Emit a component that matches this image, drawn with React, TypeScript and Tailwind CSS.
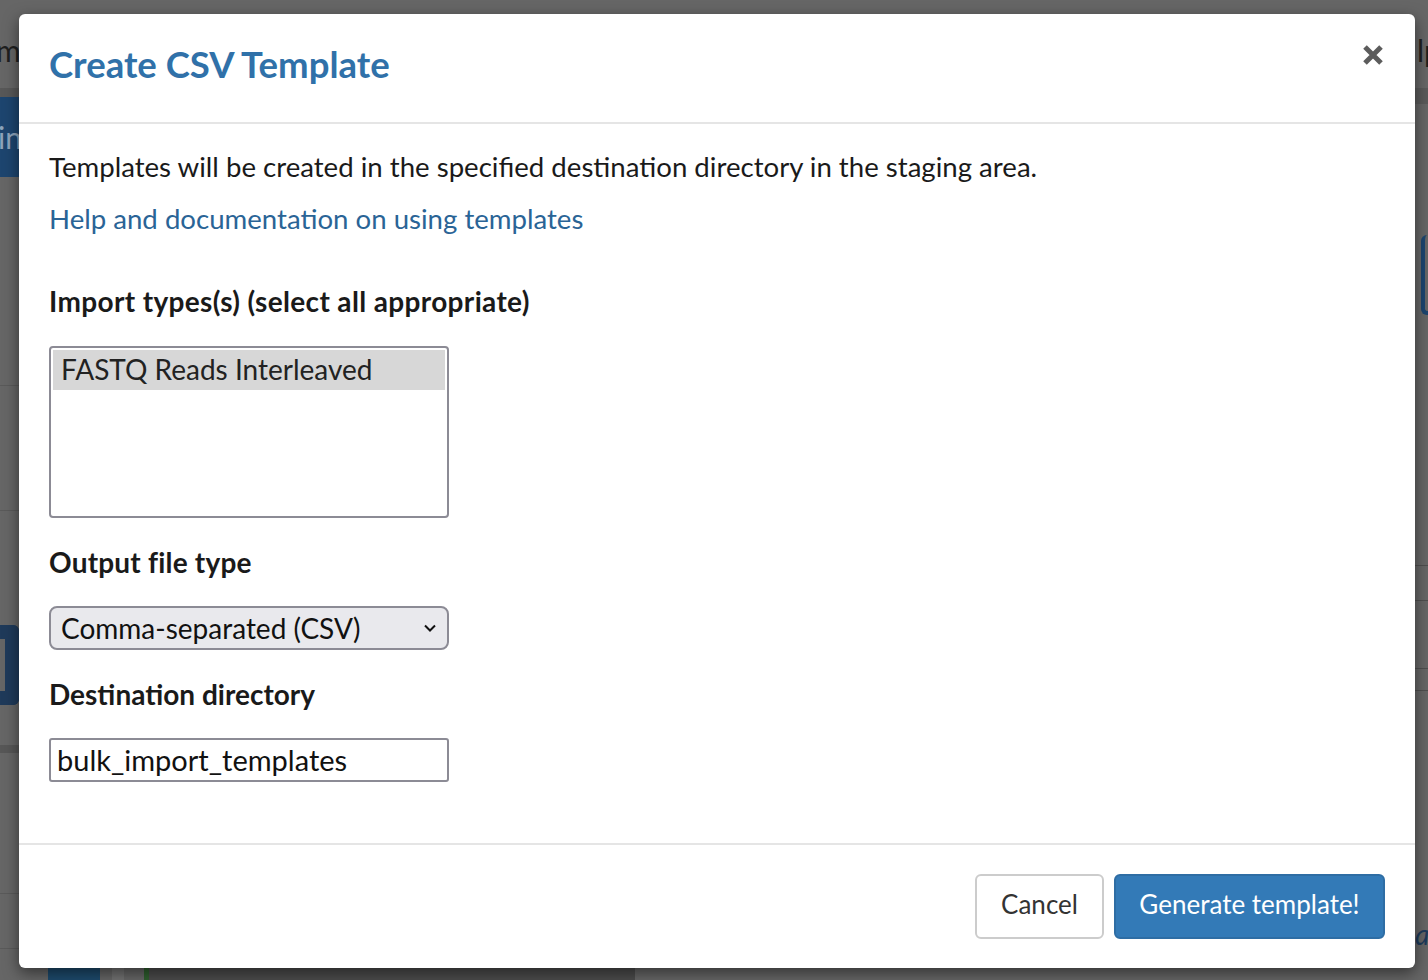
import React from 'react'

const font = { fontFamily: 'Lato, "Noto Sans", sans-serif' }

function BackgroundPage() {
  return (
    <div className="flex h-[980px] w-[1428px] bg-[#666666]">
      {/* left sliver of the page behind */}
      <div className="flex w-[19px] flex-col overflow-hidden">
        <div className="h-[30px]" />
        <div className="h-[58px] whitespace-nowrap text-[30px] leading-[40px] text-[#1f1f1f] -ml-[4px]">m</div>
        <div className="h-[9px] bg-[#585858]" />
        <div className="flex h-[80px] items-center whitespace-nowrap bg-[#1d456f] text-[30px] text-[#8ea4bb] -ml-[2px]">in</div>
        <div className="h-[208px]" />
        <div className="h-px bg-[#5a5a5a]" />
        <div className="h-[124px]" />
        <div className="h-px bg-[#5a5a5a]" />
        <div className="h-[114px]" />
        <div className="flex h-[80px] items-center">
          <div className="h-[80px] w-[19px] border-[14px] border-[#1f3a5a] border-l-0 rounded-r-[6px]" />
        </div>
        <div className="h-[40px]" />
        <div className="h-[8px] bg-[#575757]" />
        <div className="h-[140px]" />
        <div className="h-px bg-[#5a5a5a]" />
        <div className="h-[54px]" />
        <div className="h-px bg-[#5a5a5a]" />
      </div>

      <div className="flex flex-1 flex-col">
        <div className="h-[968px]" />
        <div className="flex h-[12px]">
          <div className="w-[29px]" />
          <div className="w-[52px] bg-[#1d4a6c]" />
          <div className="w-[12px]" />
          <div className="w-[12px] bg-[#727272]" />
          <div className="w-[20px]" />
          <div className="w-[5px] bg-[#2f5f2f]" />
          <div className="w-[486px] bg-[#4c4c4c]" />
        </div>
      </div>

      {/* right sliver */}
      <div className="flex w-[13px] flex-col overflow-hidden">
        <div className="h-[30px]" />
        <div className="h-[58px] whitespace-nowrap text-[30px] leading-[40px] text-[#1f1f1f] ml-[2px]">lp</div>
        <div className="h-[16px] bg-[#5a5a5a]" />
        <div className="h-[131px]" />
        <div className="ml-[6px] h-[80px] rounded-l-[6px] border-l-[4px] border-b-[4px] border-[#1d456f]" />
        <div className="h-[250px]" />
        <div className="h-px bg-[#4f4f4f]" />
        <div className="h-[34px]" />
        <div className="h-px bg-[#4f4f4f]" />
        <div className="h-[67px]" />
        <div className="h-px bg-[#4f4f4f]" />
        <div className="h-[21px]" />
        <div className="h-px bg-[#4f4f4f]" />
        <div className="h-[228px]" />
        <div className="text-[28px] italic leading-[30px] text-[#1d3a5a]">a</div>
      </div>
    </div>
  )
}

function CloseIcon() {
  return (
    <svg width="22" height="22" viewBox="0 0 22 22">
      <path d="M3 3 L19 19 M19 3 L3 19" stroke="#5c5c5c" strokeWidth="5" strokeLinecap="butt" />
    </svg>
  )
}

export default function App() {
  return (
    <div className="relative h-[980px] w-[1428px] overflow-hidden" style={font}>
      <BackgroundPage />

      <div className="absolute left-[19px] top-[14px] flex h-[954px] w-[1396px] flex-col rounded-[6px] bg-white shadow-[0_5px_15px_rgba(0,0,0,0.5)]">
        <div className="flex items-center justify-between border-b-2 border-[#e5e5e5] px-[30px] pt-[24px] pb-[32px]">
          <h4 className="text-[36.5px] font-bold leading-[52px] text-[#3071a9]">Create CSV Template</h4>
          <button className="mr-[1px] mt-[-18px]">
            <CloseIcon />
          </button>
        </div>

        <div className="flex-1 px-[30px] pt-[23px] text-[27.6px] leading-[40px] text-[#1a1a1a]">
          <p>Templates will be created in the specified destination directory in the staging area.</p>
          <p className="mt-[12px] text-[#2a6496]">Help and documentation on using templates</p>

          <div className="mt-[42px] text-[28px] font-bold tracking-[0.35px]">Import types(s) (select all appropriate)</div>
          <div className="mt-[25px] h-[172px] w-[400px] rounded-[4px] border-2 border-[#8c8b95] p-[2px]">
            <div className="h-[40px] bg-[#d7d7d7] pl-[8px] text-[28px] leading-[38px] text-[#222]">FASTQ Reads Interleaved</div>
          </div>

          <div className="mt-[24px] text-[28px] font-bold tracking-[0.2px]">Output file type</div>
          <div className="mt-[24px] flex h-[44px] w-[400px] items-center justify-between rounded-[8px] border-2 border-[#8c8b95] bg-[#e9e9ed] pl-[10px] pr-[10px] text-[28px] text-[#111]">
            <span>Comma-separated (CSV)</span>
            <svg width="14" height="10" viewBox="0 0 14 10">
              <path d="M2 2.5 L7 7.5 L12 2.5" fill="none" stroke="#111" strokeWidth="2" />
            </svg>
          </div>

          <div className="mt-[24px] text-[28px] font-bold">Destination directory</div>
          <div className="mt-[24px] flex h-[44px] w-[400px] items-center rounded-[3px] border-2 border-[#8c8b95] pl-[6px] text-[29px] text-[#111]">
            bulk_import_templates
          </div>
        </div>

        <div className="flex justify-end gap-[10px] border-t-2 border-[#e5e5e5] px-[30px] pt-[29px] pb-[29px] text-[26px]">
          <button className="h-[65px] w-[129px] rounded-[6px] border-2 border-[#cccccc] bg-white pb-[4px] text-[#333]">Cancel</button>
          <button className="h-[65px] w-[271px] rounded-[6px] border-2 border-[#2e6da4] bg-[#337ab7] pb-[4px] text-white">Generate template!</button>
        </div>
      </div>
    </div>
  )
}
